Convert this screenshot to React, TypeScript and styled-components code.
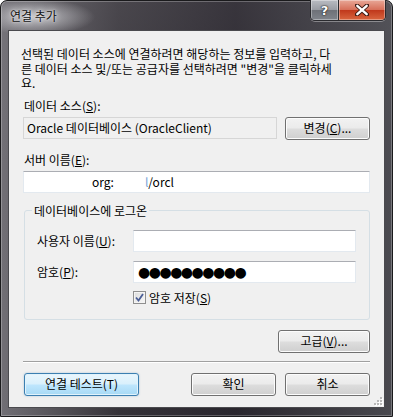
import React from "react";
import styled, { createGlobalStyle, css } from "styled-components";

const UI_FONT = `"Noto Sans CJK KR", "Noto Sans", sans-serif`;

const GlobalStyle = createGlobalStyle`
  html, body {
    margin: 0;
    padding: 0;
    background: #ffffff;
  }
  body {
    font-family: ${UI_FONT};
    font-size: 12px;
    color: #000000;
  }
`;

const Frame = styled.div`
  width: 393px;
  height: 417px;
  box-sizing: border-box;
  display: flex;
  flex-direction: column;
  padding: 0 7px 8px 7px;
  border-radius: 7px 7px 0 0;
  border: 1px solid #1a1a1c;
  background:
    radial-gradient(ellipse 60px 18px at 34px 16px, rgba(210, 210, 214, 0.85), rgba(210, 210, 214, 0) 100%),
    linear-gradient(90deg, rgba(120, 118, 124, 0.9) 0%, rgba(60, 56, 62, 0.6) 30%, rgba(40, 36, 44, 0.7) 60%, rgba(80, 80, 86, 0.8) 100%),
    linear-gradient(180deg, #5e5d63 0%, #3a383e 40%, #2c2b30 100%);
  box-shadow: inset 0 0 0 1px rgba(255, 255, 255, 0.25);
`;

const TitleBar = styled.div`
  height: 29px;
  display: flex;
  align-items: flex-start;
  justify-content: space-between;
  flex: none;
`;

const Title = styled.div`
  padding: 6px 0 0 2px;
  font-size: 12px;
  line-height: 17px;
  color: #111111;
  text-shadow: 0 0 6px rgba(255, 255, 255, 0.9), 0 0 2px rgba(255, 255, 255, 0.8);
`;

const CaptionButtons = styled.div`
  display: flex;
  margin-right: -1px;
  margin-top: -1px;
  border: 1px solid #2a2a2e;
  border-top: none;
  border-radius: 0 0 5px 5px;
  overflow: hidden;
  box-shadow: 0 1px 0 rgba(255, 255, 255, 0.35);
`;

const CaptionButton = styled.div<{ $variant: "help" | "close" }>`
  height: 20px;
  display: flex;
  align-items: center;
  justify-content: center;
  box-shadow: inset 0 0 0 1px rgba(255, 255, 255, 0.35);
  ${({ $variant }) =>
    $variant === "help"
      ? css`
          width: 27px;
          border-right: 1px solid #2a2a2e;
          background: linear-gradient(180deg, #b9bcc2 0%, #9a9da4 48%, #6e7178 52%, #80848b 100%);
        `
      : css`
          width: 46px;
          background: linear-gradient(180deg, #e8a898 0%, #d7705a 48%, #c0391c 52%, #d9663f 100%);
        `}
`;

const HelpGlyph = styled.span`
  font-family: "DejaVu Sans", sans-serif;
  font-weight: bold;
  font-size: 13px;
  line-height: 13px;
  color: #ffffff;
  text-shadow: 0 0 1px #222, 0 0 1px #222, 0 0 2px #333;
`;

const Client = styled.div`
  flex: 1;
  display: flex;
  flex-direction: column;
  background: #f0f0f0;
  border: 1px solid #4a4a4e;
  padding: 16px 14px 0 14px;
  position: relative;
`;

const Intro = styled.p`
  margin: 0 0 0 -2px;
  line-height: 14.5px;
  font-size: 12px;
  white-space: nowrap;
`;

const FieldLabel = styled.div<{ $gap: number }>`
  margin-top: ${({ $gap }) => $gap}px;
  line-height: 15px;
  padding-left: 1px;
`;

const AccessKey = styled.span`
  text-decoration: underline;
`;

const SourceRow = styled.div`
  display: flex;
  gap: 8px;
  margin-top: 4px;
  align-items: flex-start;
`;

const ReadOnlyBox = styled.div`
  width: 256px;
  height: 22px;
  box-sizing: border-box;
  border: 1px solid #d6d6d6;
  background: #f0f0f0;
  padding: 0 3px;
  line-height: 20px;
  white-space: nowrap;
`;

const TextBox = styled.div<{ $width?: number }>`
  height: 22px;
  box-sizing: border-box;
  ${({ $width }) => ($width ? `width: ${$width}px;` : "flex: 1;")}
  background: #ffffff;
  border: 1px solid #e3e9ef;
  border-top-color: #abadb3;
  padding: 0 3px;
  line-height: 20px;
  white-space: nowrap;
`;

const Blank = styled.span<{ $w: number }>`
  display: inline-block;
  width: ${({ $w }) => $w}px;
`;

const Faded = styled.span`
  color: #7aa6d8;
`;

const Dots = styled.span`
  font-family: "DejaVu Sans", sans-serif;
  font-size: 14px;
  letter-spacing: -1.5px;
  line-height: 20px;
  margin-left: 1px;
`;

const Button = styled.button<{ $width: number; $primary?: boolean }>`
  all: unset;
  box-sizing: border-box;
  width: ${({ $width }) => $width}px;
  height: 23px;
  border: 1px solid #707070;
  border-radius: 3px;
  text-align: center;
  font-family: ${UI_FONT};
  font-size: 12px;
  line-height: 20px;
  color: #000000;
  background: linear-gradient(180deg, #f2f2f2 0%, #ebebeb 48%, #dddddd 52%, #cfcfcf 100%);
  box-shadow: inset 0 0 0 1px #fcfcfc;
  flex: none;
  ${({ $primary }) =>
    $primary &&
    css`
      border-color: #3c7fb1;
      background: linear-gradient(180deg, #eaf6fd 0%, #d9f0fc 48%, #bee6fd 52%, #a7d9f5 100%);
      box-shadow: inset 0 0 0 1px #e1f3fc, 0 0 2px rgba(60, 127, 177, 0.4);
    `}
`;

const Group = styled.div`
  position: relative;
  margin: 17px 0 0 1px;
  border: 1px solid #d5dfe5;
  border-radius: 3px;
  padding: 19px 13px 14px 12px;
  display: grid;
  grid-template-columns: 96px 1fr;
  row-gap: 9px;
  align-items: center;
`;

const GroupLegend = styled.span`
  position: absolute;
  top: -8px;
  left: 7px;
  padding: 0 2px;
  line-height: 15px;
  background: #f0f0f0;
`;

const CheckRow = styled.label`
  grid-column: 2;
  display: flex;
  align-items: center;
  gap: 3px;
  margin-top: -2px;
  line-height: 15px;
`;

const CheckBox = styled.span`
  width: 13px;
  height: 13px;
  box-sizing: border-box;
  border: 1px solid #8f8f8f;
  background: linear-gradient(135deg, #dcdcdc 0%, #f8f8f8 100%);
  box-shadow: inset 0 0 0 1px #f4f4f4;
  display: flex;
  align-items: center;
  justify-content: center;
`;

const RightRow = styled.div`
  display: flex;
  justify-content: flex-end;
  margin-top: 10px;
`;

const Separator = styled.hr`
  margin: 8px 0 0 0;
  border: none;
  border-top: 1px solid #a0a0a0;
  border-bottom: 1px solid #ffffff;
  height: 0;
`;

const BottomRow = styled.div`
  display: flex;
  align-items: center;
  gap: 9px;
  margin-top: 10px;
  padding-left: 1px;
`;

const Spacer = styled.div`
  flex: 1;
`;

const Grip = styled.svg`
  position: absolute;
  right: 1px;
  bottom: 1px;
`;

export default function App() {
  return (
    <>
      <GlobalStyle />
      <Frame>
        <TitleBar>
          <Title>연결 추가</Title>
          <CaptionButtons>
            <CaptionButton $variant="help">
              <HelpGlyph>?</HelpGlyph>
            </CaptionButton>
            <CaptionButton $variant="close">
              <svg width="14" height="12" viewBox="0 0 14 12">
                <path d="M2 1.5 L12 10.5 M12 1.5 L2 10.5" stroke="#3a1a14" strokeWidth="4.2" strokeLinecap="round" />
                <path d="M2.3 1.8 L11.7 10.2 M11.7 1.8 L2.3 10.2" stroke="#ffffff" strokeWidth="2.4" strokeLinecap="round" />
              </svg>
            </CaptionButton>
          </CaptionButtons>
        </TitleBar>
        <Client>
          <Intro>
            선택된 데이터 소스에 연결하려면 해당하는 정보를 입력하고, 다
            <br />른 데이터 소스 및/또는 공급자를 선택하려면 "변경"을 클릭하세
            <br />요.
          </Intro>

          <FieldLabel $gap={7}>
            데이터 소스(<AccessKey>S</AccessKey>):
          </FieldLabel>
          <SourceRow>
            <ReadOnlyBox>Oracle 데이터베이스 (OracleClient)</ReadOnlyBox>
            <Button $width={85}>
              변경(<AccessKey>C</AccessKey>)...
            </Button>
          </SourceRow>

          <FieldLabel $gap={12}>
            서버 이름(<AccessKey>E</AccessKey>):
          </FieldLabel>
          <SourceRow>
            <TextBox $width={348}>
              <Blank $w={65} />
              org:
              <Blank $w={31} />
              <Faded>l</Faded>/orcl
            </TextBox>
          </SourceRow>

          <Group>
            <GroupLegend>데이터베이스에 로그온</GroupLegend>
            <span>
              사용자 이름(<AccessKey>U</AccessKey>):
            </span>
            <TextBox />
            <span>
              암호(<AccessKey>P</AccessKey>):
            </span>
            <TextBox>
              <Dots>●●●●●●●●●●</Dots>
            </TextBox>
            <CheckRow>
              <CheckBox>
                <svg width="9" height="9" viewBox="0 0 9 9">
                  <path d="M1 4.5 L3.5 7.5 L8 1" fill="none" stroke="#4b5e96" strokeWidth="1.8" />
                </svg>
              </CheckBox>
              <span>
                암호 저장(<AccessKey>S</AccessKey>)
              </span>
            </CheckRow>
          </Group>

          <RightRow>
            <Button $width={92}>
              고급(<AccessKey>V</AccessKey>)...
            </Button>
          </RightRow>

          <Separator />

          <BottomRow>
            <Button $width={115} $primary>
              연결 테스트(T)
            </Button>
            <Spacer />
            <Button $width={85}>확인</Button>
            <Button $width={85}>취소</Button>
          </BottomRow>

          <Grip width="10" height="10" viewBox="0 0 10 10">
            {[
              [7, 1],
              [7, 4],
              [4, 4],
              [7, 7],
              [4, 7],
              [1, 7],
            ].map(([x, y]) => (
              <g key={`${x}-${y}`}>
                <rect x={x + 1} y={y + 1} width="2" height="2" fill="#ffffff" />
                <rect x={x} y={y} width="2" height="2" fill="#b8b8b8" />
              </g>
            ))}
          </Grip>
        </Client>
      </Frame>
    </>
  );
}
